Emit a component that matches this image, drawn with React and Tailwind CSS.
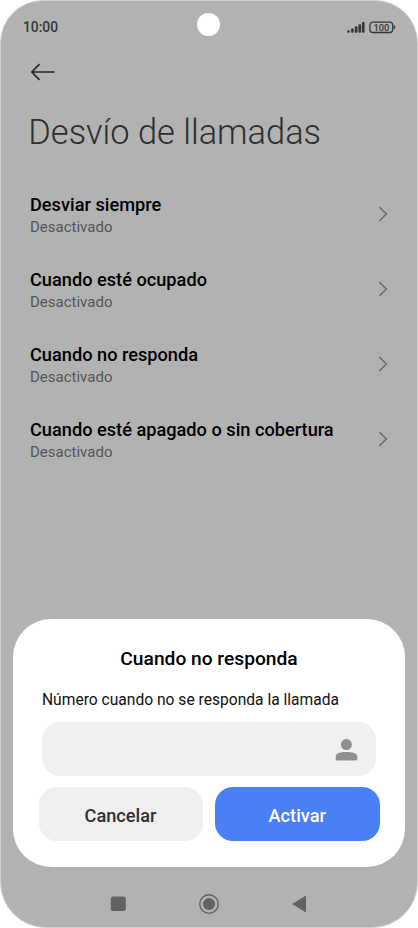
const items = [
  'Desviar siempre',
  'Cuando esté ocupado',
  'Cuando no responda',
  'Cuando esté apagado o sin cobertura',
];

function StatusBar() {
  return (
    <div className="relative flex h-[54px] items-center justify-between pl-[22px] pr-[21.5px] text-[#363636]">
      <span className="mt-[-3px] text-[13.8px] leading-[16px] font-medium">10:00</span>
      <div className="absolute left-[196px] top-[12px] h-[23px] w-[23px] rounded-full bg-white" />
      <svg className="mt-[-3px]" width="49" height="14" viewBox="0 0 49 14" fill="currentColor">
        <rect x="0.3" y="10.3" width="2.5" height="2.4" rx="0.9" />
        <rect x="4.1" y="8.4" width="2.6" height="4.3" rx="0.9" />
        <rect x="7.8" y="6.3" width="2.7" height="6.4" rx="0.9" />
        <rect x="11.4" y="4.2" width="2.7" height="8.5" rx="0.9" />
        <rect x="14.9" y="2" width="2.7" height="10.7" rx="0.9" />
        <rect x="22.9" y="2.1" width="22.8" height="10.4" rx="3" fill="none" stroke="currentColor" strokeWidth="1.3" />
        <path d="M46.6 5.3h.6c.9 0 1 .7 1 1.9s-.1 1.9-1 1.9h-.6z" />
        <text x="34.3" y="10.6" textAnchor="middle" fontSize="9.2" fontWeight="500">100</text>
      </svg>
    </div>
  );
}

function Item({ title }) {
  return (
    <li className="flex h-[75px] items-center justify-between">
      <div className="pt-[2px]">
        <div className="text-[18.2px] leading-[24px] font-medium text-black">{title}</div>
        <div className="text-[15px] leading-[20px] text-[#555]">Desactivado</div>
      </div>
      <svg width="10" height="16" viewBox="0 0 10 16" fill="none" stroke="#6a6a6a" strokeWidth="1.5">
        <path d="M1.2 1 8.4 8 1.2 15" />
      </svg>
    </li>
  );
}

function Dialog() {
  return (
    <section className="mx-[12px] flex h-[248px] flex-col rounded-[38px] bg-white px-[25.5px] pt-[28px]">
      <h2 className="text-center text-[19.2px] leading-[24px] font-medium text-black">Cuando no responda</h2>
      <p className="mt-[19px] ml-[3.5px] text-[15.6px] leading-[20px] whitespace-nowrap text-[#111]">Número cuando no se responda la llamada</p>
      <div className="mt-[12.4px] mr-[3.5px] ml-[3.5px] flex h-[54px] shrink-0 items-center justify-end rounded-[18px] bg-[#efefef] pr-[18.5px] pt-[1px]">
        <svg width="23" height="22" viewBox="0 0 23 22" fill="#8f8f8f">
          <circle cx="11.4" cy="5.6" r="5.5" />
          <path d="M.7 17.2c0-3 5.3-4.2 10.7-4.2s10.9 1.2 10.9 4.2V20c0 .9-.5 1.4-1.3 1.4H2c-.8 0-1.3-.5-1.3-1.4z" />
        </svg>
      </div>
      <div className="mt-[11px] flex justify-between text-[18.2px] font-medium">
        <button className="h-[53.5px] w-[164px] rounded-[18px] bg-[#efefef] pt-[3px] text-[#303030]">Cancelar</button>
        <button className="h-[53.5px] w-[164.5px] rounded-[18px] bg-[#4a80f5] pt-[3px] text-white">Activar</button>
      </div>
    </section>
  );
}

function NavBar() {
  return (
    <nav className="flex h-[60px] items-center justify-center pt-[14px]">
      <svg width="200" height="22" viewBox="0 0 200 22" fill="#636363">
        <rect x="1.8" y="3.5" width="15" height="14.6" rx="2.6" />
        <circle cx="100" cy="11" r="9.3" fill="none" stroke="#636363" strokeWidth="1.4" />
        <circle cx="100" cy="11" r="6" />
        <path d="M183 11 197 2.5v17z" />
      </svg>
    </nav>
  );
}

export default function App() {
  return (
    <div className="h-[928px] w-[418px] overflow-hidden bg-white font-['Roboto','Liberation_Sans',sans-serif]">
      <div className="flex h-[928px] w-[418px] flex-col rounded-t-[43px] rounded-b-[46px] border border-[#d0d0d0] bg-[#b2b2b2]">
        <StatusBar />
        <header className="pl-[28px]">
          <svg className="mt-[8px] ml-[1px]" width="26" height="18" viewBox="0 0 26 18" fill="none" stroke="#282828" strokeWidth="1.7">
            <path d="M24.5 9H2M9.5 1.2 1.8 9l7.7 7.8" />
          </svg>
          <h1 className="mt-[29px] ml-[-0.7px] text-[34.4px] leading-[44px] font-light whitespace-nowrap text-[#2e2e2e]">Desvío de llamadas</h1>
        </header>
        <ul className="mt-[22px] pr-[29px] pl-[29px]">
          {items.map((t) => <Item key={t} title={t} />)}
        </ul>
        <div className="mt-auto">
          <Dialog />
          <NavBar />
        </div>
      </div>
    </div>
  );
}
